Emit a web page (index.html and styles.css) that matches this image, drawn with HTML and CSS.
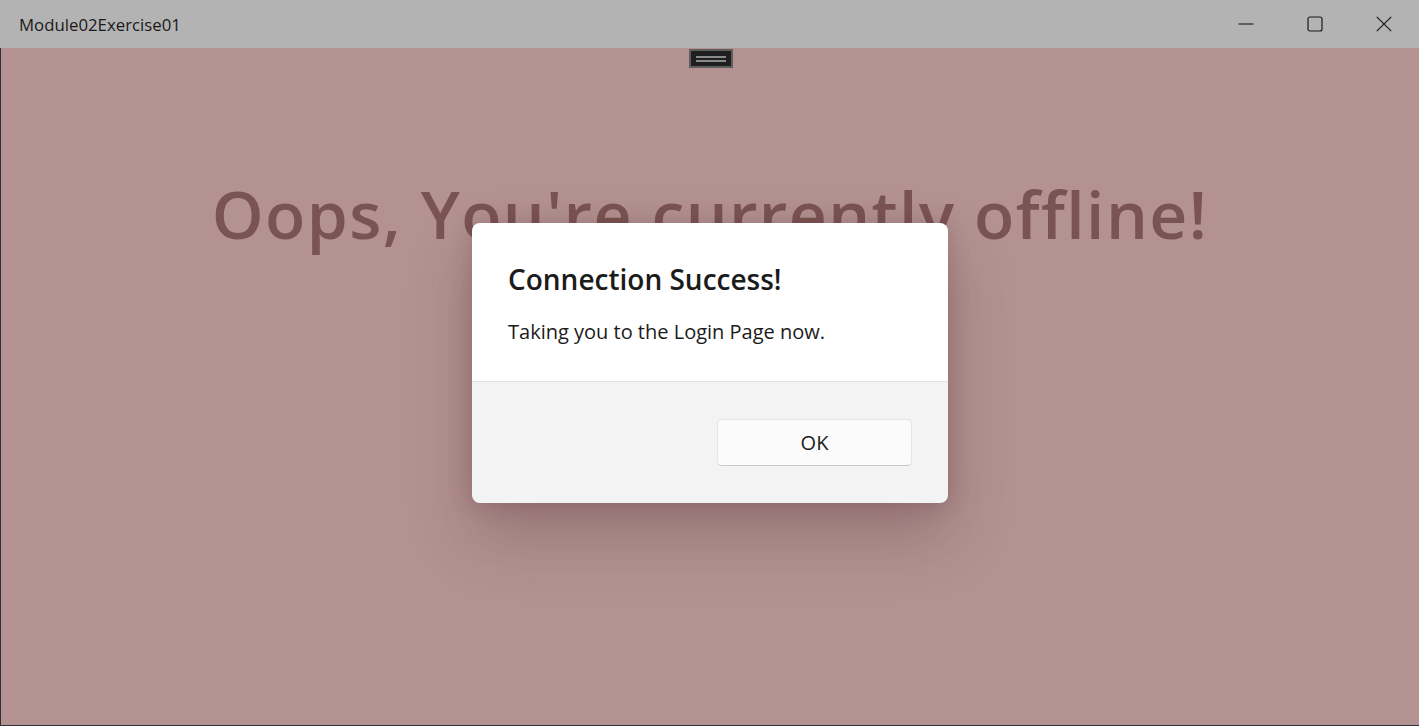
FILE: index.html
```html
<!DOCTYPE html>
<html>
<head>
<meta charset="utf-8">
<link rel="stylesheet" href="styles.css">
</head>
<body>
<div class="window">
  <header class="titlebar">
    <span class="title">Module02Exercise01</span>
    <div class="controls">
      <span class="ctl"><svg width="16" height="16" viewBox="0 0 16 16"><path d="M0.5 8h15" stroke="#1a1a1a" stroke-width="1.1"/></svg></span>
      <span class="ctl"><svg width="16" height="16" viewBox="0 0 16 16"><rect x="1" y="1" width="14" height="14" rx="2" fill="none" stroke="#1a1a1a" stroke-width="1.2"/></svg></span>
      <span class="ctl"><svg width="16" height="16" viewBox="0 0 16 16"><path d="M0.8 0.8l14.4 14.4M15.2 0.8L0.8 15.2" stroke="#1a1a1a" stroke-width="1.2"/></svg></span>
    </div>
  </header>
  <main class="content">
    <div class="handle"><span></span><span></span></div>
    <h1 class="headline">Oops, You're currently offline!</h1>
    <div class="dialog">
      <div class="dialog-body">
        <h2 class="dialog-title">Connection Success!</h2>
        <p class="dialog-text">Taking you to the Login Page now.</p>
      </div>
      <div class="dialog-footer">
        <button class="ok">OK</button>
      </div>
    </div>
  </main>
</div>
</body>
</html>
```
FILE: styles.css
```css
* { box-sizing: border-box; }
html, body { margin: 0; padding: 0; }
body {
  width: 1419px;
  height: 726px;
  overflow: hidden;
  background: #2b3338;
  font-family: "Open Sans", "Noto Sans", sans-serif;
}
.window {
  width: 1419px;
  height: 726px;
  display: flex;
  flex-direction: column;
  padding: 0 0 1px 1px;
}
.titlebar {
  height: 48px;
  background: #b3b3b3;
  display: flex;
  align-items: center;
  justify-content: space-between;
  margin-left: -1px;
  padding-left: 19px;
  padding-right: 1px;
}
.title {
  font-size: 16.8px;
  color: #1a1a1a;
  letter-spacing: 0;
}
.controls { display: flex; height: 100%; }
.ctl {
  width: 69px;
  height: 100%;
  display: flex;
  align-items: center;
  justify-content: center;
}
.content {
  flex: 1;
  background: #b39291;
  position: relative;
  display: flex;
  flex-direction: column;
  align-items: center;
}
.handle {
  width: 44px;
  height: 19px;
  background: #1f1f1f;
  border: 2px solid #5e5e5e;
  display: flex;
  flex-direction: column;
  justify-content: center;
  align-items: center;
  gap: 2px;
  margin-top: 1px;
  margin-left: 1px;
}
.handle span {
  width: 30px;
  height: 2px;
  background: #8a8a8a;
}
.headline {
  margin: 112px 0 0 0;
  font-size: 66px;
  font-weight: 600;
  color: #7a5453;
  line-height: 1;
  letter-spacing: 1.4px;
}
.dialog {
  position: absolute;
  left: 471px;
  top: 175px;
  width: 476px;
  height: 280px;
  border-radius: 8px;
  overflow: hidden;
  display: flex;
  flex-direction: column;
  box-shadow: 0 32px 64px rgba(80, 40, 45, 0.28), 0 2px 21px rgba(80, 40, 45, 0.22);
}
.dialog-body {
  background: #ffffff;
  height: 159px;
  padding: 38px 36px 0 36px;
  border-bottom: 1px solid #e2e2e2;
}
.dialog-title {
  margin: 0;
  font-size: 28px;
  font-weight: 600;
  color: #1b1b1b;
  line-height: 36px;
}
.dialog-text {
  margin: 22px 0 0 0;
  font-size: 20px;
  color: #1b1b1b;
  line-height: 26px;
}
.dialog-footer {
  flex: 1;
  background: #f3f3f3;
  display: flex;
  justify-content: flex-end;
  align-items: flex-start;
  padding: 37px 36px 0 0;
}
.ok {
  width: 195px;
  height: 47px;
  background: #fbfbfb;
  border: 1px solid #e5e5e5;
  border-bottom-color: #c8c8c8;
  border-radius: 5px;
  font-family: inherit;
  font-size: 20px;
  color: #1b1b1b;
}
```
